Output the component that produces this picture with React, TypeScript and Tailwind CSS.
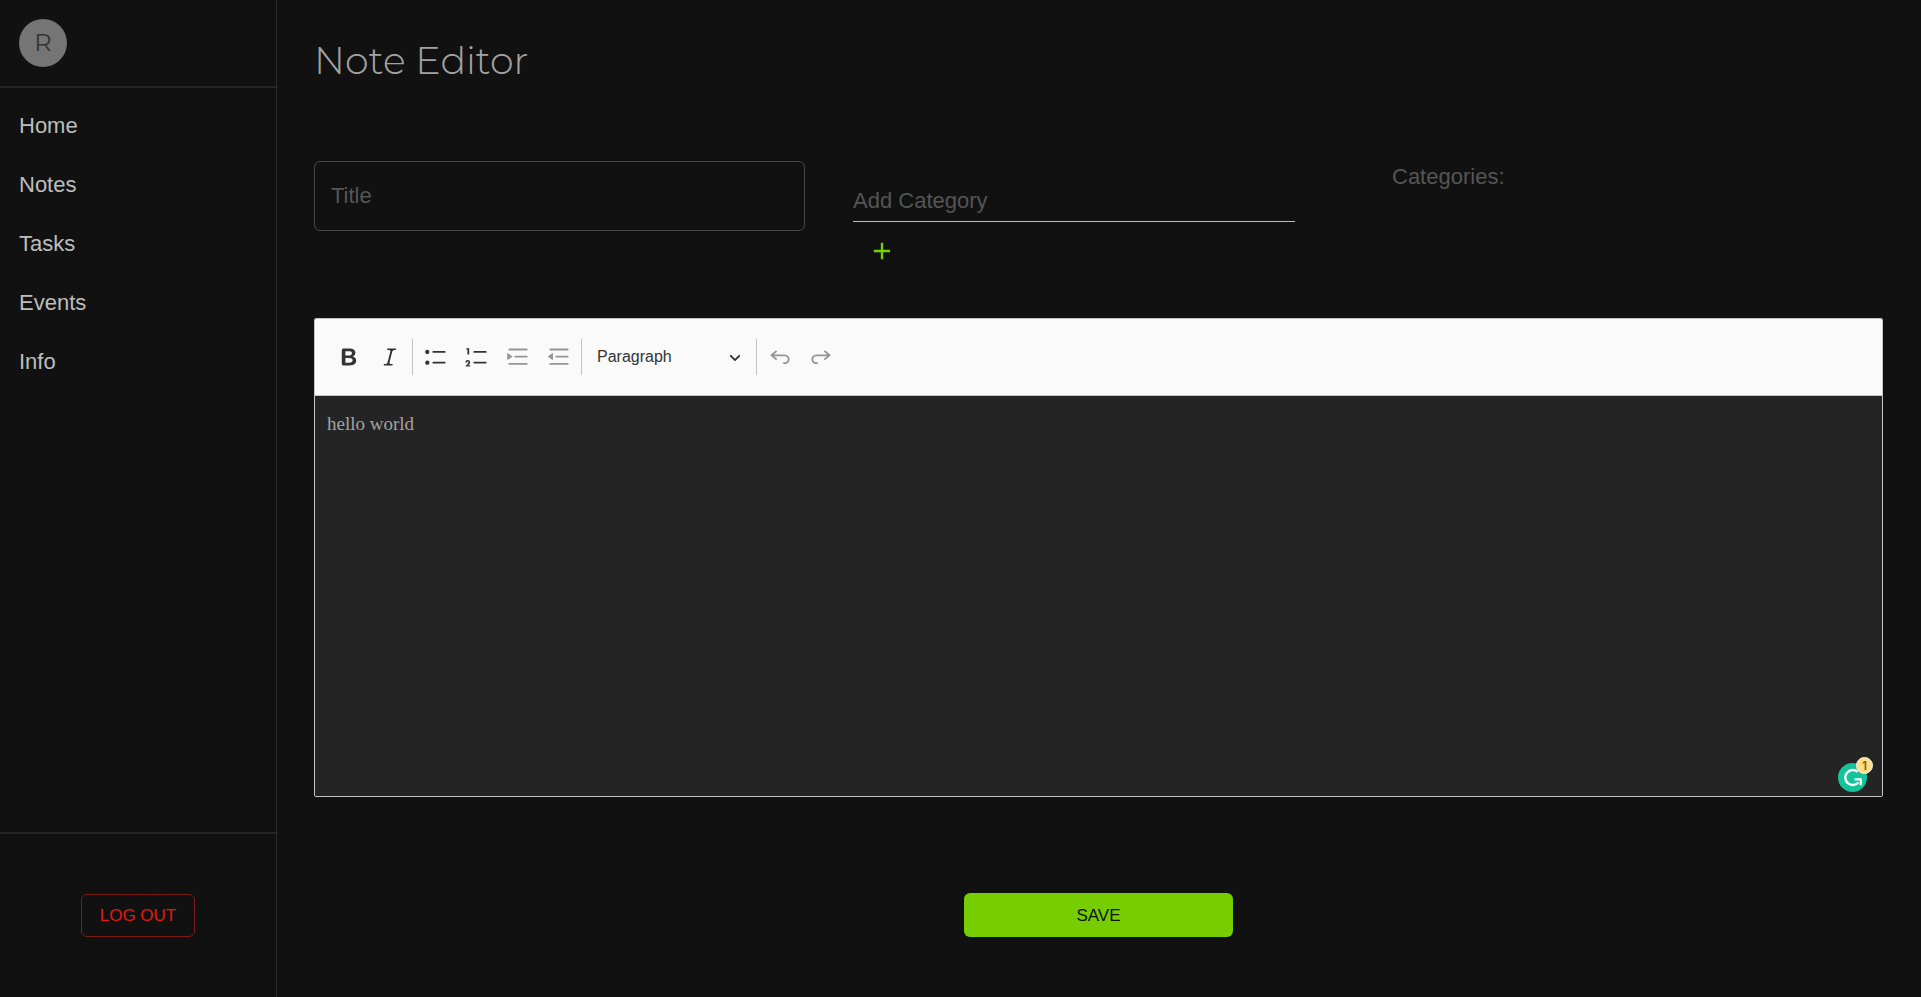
import { useState } from "react";
import type { ReactNode } from "react";

const navItems = ["Home", "Notes", "Tasks", "Events", "Info"];

const icons = {
  bold: "M10.187 17H5.773c-.637 0-1.092-.138-1.364-.415-.273-.277-.409-.718-.409-1.323V4.738c0-.617.14-1.062.419-1.332.279-.27.73-.406 1.354-.406h4.68c.69 0 1.288.041 1.793.124.506.083.96.242 1.36.478.341.197.644.447.906.75a3.262 3.262 0 0 1 .808 2.162c0 1.401-.722 2.426-2.167 3.075C15.05 10.175 16 11.315 16 13.01a3.756 3.756 0 0 1-2.296 3.504 6.1 6.1 0 0 1-1.517.377c-.571.073-1.238.11-2 .11zm-.217-6.217H7v4.087h3.069c1.977 0 2.965-.69 2.965-2.072 0-.707-.256-1.22-.768-1.537-.512-.319-1.277-.478-2.296-.478zM7 5.13v3.619h2.606c.729 0 1.292-.067 1.69-.2a1.6 1.6 0 0 0 .91-.765c.165-.267.247-.566.247-.897 0-.707-.26-1.176-.778-1.409-.519-.232-1.31-.348-2.375-.348H7z",
  italic:
    "m9.586 14.633.021.004c-.036.335.095.655.393.962.082.083.173.15.274.201h1.474a.6.6 0 1 1 0 1.2H5.304a.6.6 0 0 1 0-1.2h1.15c.474-.07.809-.182 1.005-.334.157-.122.291-.32.404-.597l2.416-9.55a1.053 1.053 0 0 0-.281-.823 1.12 1.12 0 0 0-.442-.296H8.15a.6.6 0 0 1 0-1.2h6.443a.6.6 0 1 1 0 1.2h-1.195c-.376.056-.65.155-.823.296-.215.175-.423.439-.623.79l-2.366 9.347z",
  bullets:
    "M7 5.75c0 .414.336.75.75.75h9.5a.75.75 0 1 0 0-1.5h-9.5a.75.75 0 0 0-.75.75zm-6 0C1 4.784 1.777 4 2.75 4c.966 0 1.75.777 1.75 1.75 0 .966-.777 1.75-1.75 1.75C1.784 7.5 1 6.723 1 5.75zm6 9c0 .414.336.75.75.75h9.5a.75.75 0 1 0 0-1.5h-9.5a.75.75 0 0 0-.75.75zm-6 0c0-.966.777-1.75 1.75-1.75.966 0 1.75.777 1.75 1.75 0 .966-.777 1.75-1.75 1.75-.966 0-1.75-.777-1.75-1.75z",
  numbers:
    "M7 5.75c0 .414.336.75.75.75h9.5a.75.75 0 1 0 0-1.5h-9.5a.75.75 0 0 0-.75.75zM3.5 3v5H2V3.7H1v-1h2.5V3zM.343 17.857l2.59-3.257H2.92a.6.6 0 1 0-1.04 0H.302a2 2 0 1 1 3.995 0h-.001c-.048.405-.16.734-.333.988-.175.254-.59.692-1.244 1.312H4.3v1h-4l.043-.043zM7 14.75a.75.75 0 0 1 .75-.75h9.5a.75.75 0 1 1 0 1.5h-9.5a.75.75 0 0 1-.75-.75z",
  indent:
    "M2 3.75c0 .414.336.75.75.75h14.5a.75.75 0 1 0 0-1.5H2.75a.75.75 0 0 0-.75.75zm5 6c0 .414.336.75.75.75h9.5a.75.75 0 1 0 0-1.5h-9.5a.75.75 0 0 0-.75.75zM2.75 16.5h14.5a.75.75 0 1 0 0-1.5H2.75a.75.75 0 1 0 0 1.5zM1.632 6.95 5.02 9.358a.4.4 0 0 1-.013.661l-3.39 2.207A.4.4 0 0 1 1 11.892V7.275a.4.4 0 0 1 .632-.326z",
  outdent:
    "M2 3.75c0 .414.336.75.75.75h14.5a.75.75 0 1 0 0-1.5H2.75a.75.75 0 0 0-.75.75zm5 6c0 .414.336.75.75.75h9.5a.75.75 0 1 0 0-1.5h-9.5a.75.75 0 0 0-.75.75zM2.75 16.5h14.5a.75.75 0 1 0 0-1.5H2.75a.75.75 0 1 0 0 1.5zM4.368 6.95.98 9.358a.4.4 0 0 0 .013.661l3.39 2.207A.4.4 0 0 0 5 11.892V7.275a.4.4 0 0 0-.632-.326z",
  undo: "m5.042 9.367 2.189 1.837a.75.75 0 0 1-.965 1.149l-3.788-3.18a.747.747 0 0 1-.21-.284.75.75 0 0 1 .17-.945L6.23 4.762a.75.75 0 1 1 .964 1.15L4.863 7.866h8.917A.75.75 0 0 1 14 7.9a4 4 0 1 1-1.477 7.718l.344-1.489a2.5 2.5 0 1 0 1.094-4.73l.008-.032H5.042z",
  redo: "m14.958 9.367-2.189 1.837a.75.75 0 0 0 .965 1.149l3.788-3.18a.747.747 0 0 0 .21-.284.75.75 0 0 0-.17-.945L13.77 4.762a.75.75 0 1 0-.964 1.15l2.331 1.955H6.22A.75.75 0 0 0 6 7.9a4 4 0 1 0 1.477 7.718l-.344-1.489A2.5 2.5 0 1 1 6.039 9.4l-.008-.032h8.927z",
};

function ToolButton({ icon, label, disabled = false }: { icon: keyof typeof icons; label: string; disabled?: boolean }) {
  return (
    <button
      type="button"
      aria-label={label}
      disabled={disabled}
      className="flex size-9 items-center justify-center rounded-sm text-[#333] enabled:hover:bg-[#e6e6e6] disabled:opacity-50"
    >
      <svg viewBox="0 0 20 20" className="size-6" fill="currentColor" aria-hidden="true">
        <path fillRule="evenodd" d={icons[icon]} />
      </svg>
    </button>
  );
}

function Separator() {
  return <span className="-ml-px h-9 w-px bg-[#c4c4c4]" />;
}

function Sidebar() {
  return (
    <aside className="flex w-[277px] shrink-0 flex-col border-r border-[#2a2a2a]">
      <div className="border-b-2 border-[#262626] px-[19px] pt-[19px] pb-[19px]">
        <div className="flex size-12 items-center justify-center rounded-full bg-[#757575] font-[Montserrat,Lato,sans-serif] text-2xl text-[#333]">
          R
        </div>
      </div>
      <nav className="flex flex-col gap-[27px] px-[19px] pt-[22px] text-[22px] leading-8 text-[#bdbdbd]">
        {navItems.map((item) => (
          <a key={item} href={"#" + item.toLowerCase()} className="hover:text-white">
            {item}
          </a>
        ))}
      </nav>
      <div className="mt-auto flex justify-center border-t-2 border-[#262626] pt-[60px] pb-[60px]">
        <button
          type="button"
          className="h-[43px] rounded-md border border-[#7d1b16] px-[18px] text-[17px] text-[#e3190f] hover:bg-[#1f1111]"
        >
          LOG OUT
        </button>
      </div>
    </aside>
  );
}

function AssistantBadge() {
  return (
    <svg viewBox="0 0 36 36" className="absolute right-[9px] bottom-[3px] size-9" role="img" aria-label="1 suggestion">
      <circle cx="15.5" cy="20.5" r="14.5" fill="#15c39a" />
      <path d="M20.6 14.8a7.5 7.5 0 1 0 .8 10.7" fill="none" stroke="#fff" strokeWidth="2.4" />
      <path d="M17.6 22.3h6.2v6" fill="none" stroke="#fff" strokeWidth="2.2" />
      <circle cx="27.5" cy="8.5" r="8" fill="#ffde85" stroke="#f7f1e4" />
      <text x="27.5" y="12.5" textAnchor="middle" fontSize="12" fontFamily="Inter, sans-serif" fontWeight="600" fill="#8a5d12">
        1
      </text>
    </svg>
  );
}

function Editor({ children }: { children: ReactNode }) {
  return (
    <section className="overflow-hidden rounded-xs border border-[#c4c4c4]">
      <div className="flex h-[77px] items-center gap-[5px] border-b border-[#c4c4c4] bg-[#fafafa] px-4">
        <ToolButton icon="bold" label="Bold" />
        <ToolButton icon="italic" label="Italic" />
        <Separator />
        <ToolButton icon="bullets" label="Bulleted List" />
        <ToolButton icon="numbers" label="Numbered List" />
        <ToolButton icon="indent" label="Increase indent" disabled />
        <ToolButton icon="outdent" label="Decrease indent" disabled />
        <Separator />
        <div className="grid w-[165px] items-center">
          <select
            aria-label="Heading"
            className="col-start-1 row-start-1 h-9 appearance-none rounded-sm bg-transparent px-[10px] text-base text-[#333] outline-none"
          >
            <option>Paragraph</option>
            <option>Heading 1</option>
            <option>Heading 2</option>
          </select>
          <svg
            viewBox="0 0 10 10"
            className="pointer-events-none col-start-1 row-start-1 mr-[11px] size-3 justify-self-end"
            fill="#333"
            aria-hidden="true"
          >
            <path d="M.941 4.523a.75.75 0 1 1 1.06-1.06l3.006 3.005 3.005-3.005a.75.75 0 1 1 1.06 1.06l-3.549 3.55a.75.75 0 0 1-1.168-.136L.941 4.523z" />
          </svg>
        </div>
        <Separator />
        <ToolButton icon="undo" label="Undo" disabled />
        <ToolButton icon="redo" label="Redo" disabled />
      </div>
      {children}
    </section>
  );
}

export default function App() {
  const [title, setTitle] = useState("");
  const [category, setCategory] = useState("");

  return (
    <div className="flex min-h-screen bg-[#111] font-['Liberation_Sans',Arial,sans-serif]">
      <Sidebar />
      <main className="flex min-w-0 flex-1 flex-col pr-[38px] pl-[37px]">
        <h1 className="pt-[37px] font-[Montserrat,Inter,sans-serif] text-[38px] leading-[48px] font-light text-[#a3a3a3]">
          Note Editor
        </h1>

        <div className="mt-19 grid h-[157px] grid-cols-3 items-start gap-12 text-[22px]">
          <input
            aria-label="Title"
            placeholder="Title"
            value={title}
            onChange={(e) => setTitle(e.target.value)}
            className="h-[70px] w-full rounded-md border border-[#484848] bg-transparent px-4 text-[#bdbdbd] outline-none placeholder:text-[#555]"
          />
          <div className="flex flex-col items-start pt-5">
            <input
              aria-label="Add Category"
              placeholder="Add Category"
              value={category}
              onChange={(e) => setCategory(e.target.value)}
              className="h-[41px] w-9/10 border-b border-[#bdbdbd] bg-transparent text-[#bdbdbd] outline-none placeholder:text-[#555]"
            />
            <button type="button" aria-label="Add" className="mt-2 ml-[9px] flex h-[42px] w-10 items-center justify-center text-[#76cf00]">
              <svg viewBox="0 0 24 24" className="size-7" fill="currentColor" aria-hidden="true">
                <path d="M19 13h-6v6h-2v-6H5v-2h6V5h2v6h6z" />
              </svg>
            </button>
          </div>
          <p className="leading-8 text-[#555]">Categories:</p>
        </div>

        <Editor>
          <div className="relative">
            <div
              contentEditable
              suppressContentEditableWarning
              role="textbox"
              aria-label="Note body"
              className="min-h-[400px] bg-[#242424] px-3 py-4 font-['Liberation_Serif',serif] text-[19px] leading-6 text-[#a3a3a3] outline-none"
            >
              <p>hello world</p>
            </div>
            <AssistantBadge />
          </div>
        </Editor>

        <div className="mt-24 flex justify-center pb-10">
          <button
            type="button"
            className="h-11 w-[269px] rounded-md bg-[#76cd00] pt-px text-[17px] text-[#111] shadow-sm hover:bg-[#69b800]"
          >
            SAVE
          </button>
        </div>
      </main>
    </div>
  );
}
